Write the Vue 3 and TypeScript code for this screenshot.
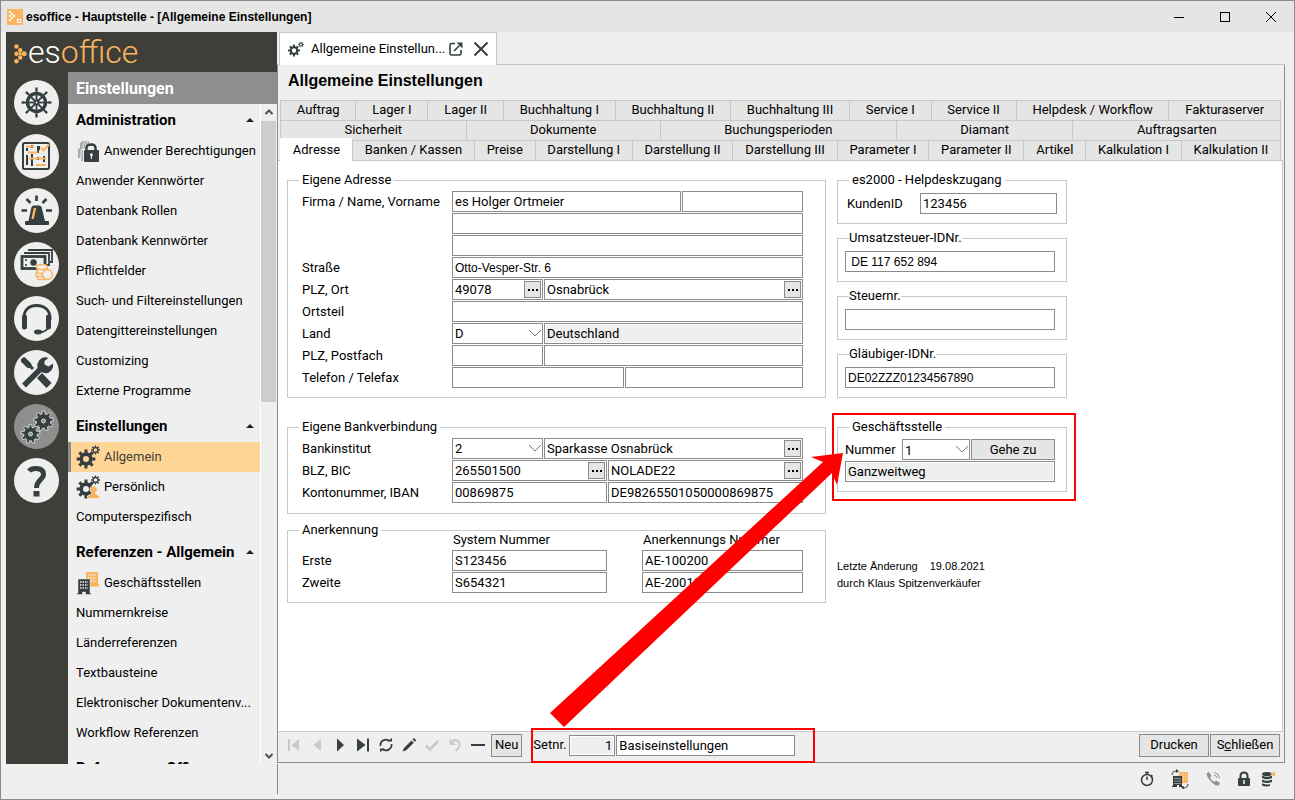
<script setup lang="ts">
import { ref } from 'vue'

interface NavItem {
  label: string
  icon?: 'locks' | 'gears' | 'person' | 'buildings'
}
interface NavGroup {
  title: string
  items: NavItem[]
}

const groups: NavGroup[] = [
  {
    title: 'Administration',
    items: [
      { label: 'Anwender Berechtigungen', icon: 'locks' },
      { label: 'Anwender Kennwörter' },
      { label: 'Datenbank Rollen' },
      { label: 'Datenbank Kennwörter' },
      { label: 'Pflichtfelder' },
      { label: 'Such- und Filtereinstellungen' },
      { label: 'Datengittereinstellungen' },
      { label: 'Customizing' },
      { label: 'Externe Programme' },
    ],
  },
  {
    title: 'Einstellungen',
    items: [
      { label: 'Allgemein', icon: 'gears' },
      { label: 'Persönlich', icon: 'person' },
      { label: 'Computerspezifisch' },
    ],
  },
  {
    title: 'Referenzen - Allgemein',
    items: [
      { label: 'Geschäftsstellen', icon: 'buildings' },
      { label: 'Nummernkreise' },
      { label: 'Länderreferenzen' },
      { label: 'Textbausteine' },
      { label: 'Elektronischer Dokumentenv...' },
      { label: 'Workflow Referenzen' },
    ],
  },
  { title: 'Referenzen - Office', items: [] },
]

const tabRows: string[][] = [
  ['Auftrag', 'Lager I', 'Lager II', 'Buchhaltung I', 'Buchhaltung II', 'Buchhaltung III', 'Service I', 'Service II', 'Helpdesk / Workflow', 'Fakturaserver'],
  ['Sicherheit', 'Dokumente', 'Buchungsperioden', 'Diamant', 'Auftragsarten'],
  ['Adresse', 'Banken / Kassen', 'Preise', 'Darstellung I', 'Darstellung II', 'Darstellung III', 'Parameter I', 'Parameter II', 'Artikel', 'Kalkulation I', 'Kalkulation II'],
]

const modules = ['Cockpit', 'Projekte', 'Alarm', 'Finanzen', 'Service', 'Werkzeuge', 'Einstellungen', 'Hilfe']

const activeNav = ref('Allgemein')
const activeTab = ref('Adresse')
const activeModule = ref('Einstellungen')

/** Closed outline of a cog wheel with a round hole (even-odd filled). */
function gear(cx: number, cy: number, teeth: number, outer: number, inner: number, hole: number): string {
  const step = (Math.PI * 2) / teeth
  const pts: string[] = []
  const add = (r: number, a: number) => pts.push(`${(cx + r * Math.cos(a)).toFixed(2)} ${(cy + r * Math.sin(a)).toFixed(2)}`)
  for (let i = 0; i < teeth; i++) {
    const a = i * step - Math.PI / 2
    add(inner, a - step * 0.3)
    add(outer, a - step * 0.2)
    add(outer, a + step * 0.2)
    add(inner, a + step * 0.3)
  }
  return `M${pts.join('L')}ZM${cx - hole} ${cy}a${hole} ${hole} 0 1 0 ${hole * 2} 0a${hole} ${hole} 0 1 0 ${-hole * 2} 0Z`
}

const spokes = [0, 45, 90, 135, 180, 225, 270, 315]
</script>

<template>
  <div class="window">
    <header class="titlebar">
      <svg class="app-icon" viewBox="0 0 16 16" aria-hidden="true">
        <rect width="16" height="16" fill="#fbb55e" />
        <g fill="#fff">
          <rect x="2" y="2" width="2" height="2" /><rect x="4" y="4" width="2" height="2" /><rect x="2" y="6" width="2" height="2" /><rect x="6" y="6" width="2" height="2" /><rect x="4" y="8" width="2" height="2" /><rect x="2" y="10" width="2" height="2" />
        </g>
        <rect x="10.5" y="10.5" width="3" height="3" fill="none" stroke="#fff" />
      </svg>
      <span class="window-title">esoffice - Hauptstelle - [Allgemeine Einstellungen]</span>
      <div class="window-controls">
        <button type="button" aria-label="Minimieren"><svg viewBox="0 0 12 12"><path d="M1 6.5H11" /></svg></button>
        <button type="button" aria-label="Maximieren"><svg viewBox="0 0 12 12"><rect x="1.5" y="1.5" width="9" height="9" /></svg></button>
        <button type="button" aria-label="Fenster schließen"><svg viewBox="0 0 12 12"><path d="M1 1L11 11M11 1L1 11" /></svg></button>
      </div>
    </header>

    <div class="workspace">
      <aside class="sidebar">
        <div class="logo">
          <svg viewBox="0 0 13 20" aria-hidden="true">
            <g fill="#fbb55e"><circle cx="2.5" cy="2.5" r="2.2" /><circle cx="6.2" cy="6.2" r="2.2" /><circle cx="2.5" cy="9.8" r="2.2" /><circle cx="10.200" cy="9.8" r="2.500" /><circle cx="6.2" cy="13.5" r="2.2" /><circle cx="2.5" cy="17.2" r="2.2" /><circle cx="6.3" cy="9.8" r="1.600" /></g>
          </svg>
          <span class="logo-text">es<b>office</b></span>
        </div>
        <nav class="rail" aria-label="Module">
          <button v-for="(m, i) in modules" :key="m" type="button" :aria-label="m" :class="{ current: m === activeModule }" @click="activeModule = m">
            <svg viewBox="0 0 45 45" fill="none" stroke="#353f40">
              <g v-if="i === 0">
                <circle cx="22.5" cy="22.5" r="9" stroke-width="3.4" />
                <g v-for="a in spokes" :key="a" :transform="`rotate(${a} 22.5 22.5)`"><path d="M22.5 22.5V9" stroke-width="1.8" /><path d="M22.5 7.5V10.5" stroke-width="2.2" /></g>
                <circle cx="22.5" cy="22.5" r="2.6" fill="#353f40" /><circle cx="22.5" cy="22.5" r="1" fill="#efefef" stroke="none" />
              </g>
              <g v-else-if="i === 1">
                <rect x="9" y="9" width="26" height="26" rx="1.5" stroke-width="2" />
                <path d="M13 14V17M13 21V31M18 11V14M18 20V32M24 12V19M24 23V26M24 30V32M30 22V28M25 12V16" stroke-width="2" />
                <path d="M12 12.5H20M14 18.5H24M15 24.5H32M22 31H32M27 13.5L29.5 16.5L35 10.5" stroke="#fbb55e" stroke-width="2" />
              </g>
              <g v-else-if="i === 2">
                <path d="M14.5 33L17.5 19Q18 17.5 20 17.5H25Q27 17.5 27.5 19L31 33Z" fill="#353f40" stroke="none" />
                <rect x="11" y="33" width="24" height="4" rx="1" fill="#353f40" stroke="none" />
                <path d="M21 20L18.5 31" stroke="#fbb55e" stroke-width="2.4" />
                <path d="M22.5 7.5V13M12.5 11L16.5 15M32.5 11L28.5 15M7.5 22.5H13M32 22.5H38" stroke-width="2.6" />
              </g>
              <g v-else-if="i === 3">
                <path d="M15 9V8H38V20H36M11 12V11H35V23H32" stroke-width="1.8" />
                <rect x="8" y="14.5" width="23" height="12" stroke-width="2.8" />
                <circle cx="19.500" cy="20.500" r="3.200" fill="#353f40" stroke="none" /><circle cx="12" cy="18" r="1" fill="#353f40" stroke="none" /><circle cx="12" cy="23" r="1" fill="#353f40" stroke="none" />
                <g fill="#efefef" stroke="#fbb55e" stroke-width="1.4"><rect x="23" y="32.500" width="11" height="5" rx="2.500" /><rect x="22" y="29.500" width="11" height="5" rx="2.500" /><rect x="23" y="26.500" width="11" height="5" rx="2.500" /><ellipse cx="28" cy="25" rx="5.500" ry="2.500" /><circle cx="33.500" cy="32.500" r="5" /></g>
              </g>
              <g v-else-if="i === 4">
                <path d="M10 24C9 14 15 9.500 22.500 9.500S37 14 36 24" stroke-width="2.800" />
                <path d="M10.500 21V31M34.500 21V31" stroke-width="5" stroke-linecap="round" />
                <path d="M35 30Q33 36 25 36.500" stroke-width="1.800" />
                <ellipse cx="24" cy="36" rx="4" ry="2.400" fill="#353f40" stroke="none" />
              </g>
              <g v-else-if="i === 5">
                <path d="M12 12L19 19" stroke-width="3" /><path d="M10 10.500L14.500 15" stroke-width="6" stroke-linecap="round" />
                <path d="M25 25L35 35.500" stroke-width="7" />
                <path d="M10 35.500L29 16.500" stroke="#efefef" stroke-width="8" />
                <path d="M10 35.500L28 17.500" stroke-width="5.500" />
                <path d="M34.500 8A8 8 0 1 0 39 13.500L34.500 16.500L30.500 14.500L30.500 11Z" fill="#353f40" stroke="none" />
              </g>
              <g v-else-if="i === 6" fill="#353f40" fill-rule="evenodd" stroke="#efefef" stroke-width="0.8">
                <path :d="gear(29.5, 17, 9, 10, 7.3, 2)" /><path :d="gear(16.5, 30, 9, 9.5, 6.8, 2)" />
              </g>
              <g v-else>
                <path d="M15 13Q17 10.500 22 10.500Q29.500 10.500 29.500 16.500C29.500 21.500 22.500 22 22.500 30" stroke-width="5" />
                <rect x="19.500" y="33" width="6" height="5.500" fill="#353f40" stroke="none" />
              </g>
            </svg>
          </button>
        </nav>
        <h2 class="nav-title">Einstellungen</h2>
        <nav class="nav-list" aria-label="Einstellungen">
          <section v-for="g in groups" :key="g.title">
            <h3>{{ g.title }}<span class="collapse" aria-hidden="true"></span></h3>
            <a v-for="it in g.items" :key="it.label" href="#" :class="{ selected: it.label === activeNav }" @click.prevent="activeNav = it.label">
              <svg v-if="it.icon" viewBox="0 0 24 24" aria-hidden="true">
                <g v-if="it.icon === 'locks'">
                  <path d="M2 19V9.500H4V5Q4 2 9 2H13V8L9 22H5V19Z" fill="#a8abab" />
                  <path d="M5 20V10.500H7V6Q7 3 12 3" fill="none" stroke="#efefef" />
                  <path d="M7 22V9.500H9V7Q10 4 15 4T21 8V22Z" fill="#efefef" />
                  <path d="M10.500 12V9Q10.500 5.500 15 5.500T19.500 9V12" fill="none" stroke="#353f40" stroke-width="2.400" />
                  <rect x="8" y="11" width="15" height="12" rx="1" fill="#353f40" /><path d="M14.200 14.500h2.400v2l-.7 1v2.500h-1v-2.500l-.7-1z" fill="#fff" />
                </g>
                <g v-else-if="it.icon === 'gears' || it.icon === 'person'" fill-rule="evenodd" fill="#353f40">
                  <path :d="gear(10, 14, 8, 9.5, 6.6, 3)" /><path :d="gear(19.5, 5, 8, 4.5, 3.1, 1.8)" />
                  <path v-if="it.icon === 'person'" d="M17.500 11a3.500 3.500 0 0 1 2 6.500v1.500l4 2v2.500H11.500v-2.500l4-2v-1.500a3.500 3.500 0 0 1 2-6.500z" fill="#fbb55e" stroke="#efefef" stroke-width="0.6" />
                </g>
                <g v-else>
                  <rect x="10" y="1" width="12" height="14" fill="#fbb55e" /><path d="M12 4H20M12 7H20M12 10H20" stroke="#efefef" stroke-width="1.500" stroke-dasharray="1.500 1" /><rect x="14" y="13" width="9" height="2.500" fill="#fbb55e" />
                  <path d="M2 8H14V22H15V23.500H9.500V21H6.500V23.500H1V22H2Z" fill="#353f40" stroke="#efefef" stroke-width="0.5" /><path d="M4 11H12M4 14H12M4 17H12" stroke="#efefef" stroke-width="1.500" stroke-dasharray="1.500 1" />
                </g>
              </svg>
              <span>{{ it.label }}</span>
            </a>
          </section>
        </nav>
        <div class="scrollbar" aria-hidden="true">
          <svg viewBox="0 0 16 16"><path d="M4.500 10L8 6.500L11.500 10" /></svg>
          <div class="thumb"></div>
          <svg viewBox="0 0 16 16"><path d="M4.500 6L8 9.500L11.500 6" /></svg>
        </div>
      </aside>

      <main class="main">
        <div class="doc-tabs">
          <div class="doc-tab">
            <svg viewBox="0 0 16 16" fill="#353f40" fill-rule="evenodd" aria-hidden="true"><path :d="gear(6, 9.5, 8, 6, 4.3, 2.2)" /><path :d="gear(13, 3.5, 8, 2.8, 1.9, 1)" /></svg>
            <span>Allgemeine Einstellun...</span>
            <button type="button" aria-label="Abdocken"><svg viewBox="0 0 16 16" fill="none" stroke="#353f40" stroke-width="1.600"><path d="M7 2.500H3.500Q2 2.500 2 4V12.500Q2 14 3.500 14H11.500Q13 14 13 12.500V9M6 10L11.500 4.500" /><path d="M8.500 1.500H14.500V7.500Z" fill="#353f40" stroke="none" /></svg></button>
            <button type="button" aria-label="Tab schließen"><svg viewBox="0 0 16 16" fill="none" stroke="#353f40" stroke-width="2"><path d="M1.500 1.500L14.500 14.500M14.500 1.500L1.500 14.500" /></svg></button>
          </div>
        </div>

        <div class="panel">
          <h1>Allgemeine Einstellungen</h1>
          <div class="tabs" role="tablist">
            <div v-for="(row, r) in tabRows" :key="r" class="tab-row">
              <button v-for="t in row" :key="t" type="button" role="tab" :aria-selected="t === activeTab" :class="{ active: t === activeTab }" @click="activeTab = t">{{ t }}</button>
            </div>
          </div>

          <form class="page" @submit.prevent>
            <div class="col">
              <fieldset class="address">
                <legend>Eigene Adresse</legend>
                <div class="rows">
                  <div class="row"><label for="firma">Firma / Name, Vorname</label><div class="fields name"><input id="firma" value="es Holger Ortmeier"><input aria-label="Vorname"></div></div>
                  <div class="row"><span></span><div class="fields"><input aria-label="Name Zusatz 1"></div></div>
                  <div class="row"><span></span><div class="fields"><input aria-label="Name Zusatz 2"></div></div>
                  <div class="row"><label for="str">Straße</label><div class="fields"><input id="str" class="sans" value="Otto-Vesper-Str. 6"></div></div>
                  <div class="row"><label for="plz">PLZ, Ort</label><div class="fields short"><span class="lookup"><input id="plz" value="49078"><button type="button" aria-label="PLZ suchen"><i></i></button></span><span class="lookup"><input aria-label="Ort" value="Osnabrück"><button type="button" aria-label="Ort suchen"><i></i></button></span></div></div>
                  <div class="row"><label for="ot">Ortsteil</label><div class="fields"><input id="ot"></div></div>
                  <div class="row"><label for="land">Land</label><div class="fields short"><span class="combo"><select id="land"><option>D</option></select><svg viewBox="0 0 14 8"><path d="M1 1L7 7L13 1" /></svg></span><input aria-label="Landname" readonly value="Deutschland"></div></div>
                  <div class="row"><label for="pf">PLZ, Postfach</label><div class="fields short"><input id="pf"><input aria-label="Postfach"></div></div>
                  <div class="row"><label for="tel">Telefon / Telefax</label><div class="fields phone"><input id="tel"><input aria-label="Telefax"></div></div>
                </div>
              </fieldset>

              <fieldset class="bank">
                <legend>Eigene Bankverbindung</legend>
                <div class="rows">
                  <div class="row"><label for="bank">Bankinstitut</label><div class="fields short"><span class="combo"><select id="bank"><option>2</option></select><svg viewBox="0 0 14 8"><path d="M1 1L7 7L13 1" /></svg></span><span class="lookup"><input aria-label="Bankname" value="Sparkasse Osnabrück"><button type="button" aria-label="Bank suchen"><i></i></button></span></div></div>
                  <div class="row"><label for="blz">BLZ, BIC</label><div class="fields account"><span class="lookup"><input id="blz" value="265501500"><button type="button" aria-label="BLZ suchen"><i></i></button></span><span class="lookup"><input aria-label="BIC" value="NOLADE22"><button type="button" aria-label="BIC suchen"><i></i></button></span></div></div>
                  <div class="row"><label for="konto">Kontonummer, IBAN</label><div class="fields account"><input id="konto" value="00869875"><input aria-label="IBAN" value="DE98265501050000869875"></div></div>
                </div>
              </fieldset>

              <fieldset class="approval">
                <legend>Anerkennung</legend>
                <div class="rows">
                  <div class="row head"><span></span><div class="fields numbers"><span>System Nummer</span><span>Anerkennungs Nummer</span></div></div>
                  <div class="row"><label for="s1">Erste</label><div class="fields numbers"><input id="s1" value="S123456"><input aria-label="Anerkennungs Nummer 1" value="AE-100200"></div></div>
                  <div class="row"><label for="s2">Zweite</label><div class="fields numbers"><input id="s2" value="S654321"><input aria-label="Anerkennungs Nummer 2" value="AE-200100"></div></div>
                </div>
              </fieldset>
            </div>

            <div class="col side">
              <fieldset class="helpdesk">
                <legend>es2000 - Helpdeskzugang</legend>
                <div class="customer"><label for="kid">KundenID</label><input id="kid" value="123456"></div>
              </fieldset>
              <fieldset class="tight"><legend><label for="ust">Umsatzsteuer-IDNr.</label></legend><input id="ust" class="sans" value=" DE 117 652 894"></fieldset>
              <fieldset class="tight"><legend><label for="stnr">Steuernr.</label></legend><input id="stnr"></fieldset>
              <fieldset class="tight"><legend><label for="gid">Gläubiger-IDNr.</label></legend><input id="gid" class="sans" value="DE02ZZZ01234567890"></fieldset>
              <div class="branch">
                <fieldset>
                  <legend>Geschäftsstelle</legend>
                  <div class="branch-row"><label for="nr">Nummer</label><span class="combo"><select id="nr"><option>1</option></select><svg viewBox="0 0 14 8"><path d="M1 1L7 7L13 1" /></svg></span><button type="button" class="btn">Gehe zu</button></div>
                  <input aria-label="Name der Geschäftsstelle" readonly value="Ganzweitweg">
                </fieldset>
                <div class="mark"></div>
              </div>
              <p class="changed"><span>Letzte Änderung</span><span>19.08.2021</span><br>durch Klaus Spitzenverkäufer</p>
            </div>
          </form>

          <div class="toolbar">
            <div class="record-nav">
              <button type="button" disabled aria-label="Erster"><svg viewBox="0 0 16 16"><path d="M2 2H4V14H2ZM13 2V14L5.500 8Z" /></svg></button>
              <button type="button" disabled aria-label="Zurück"><svg viewBox="0 0 16 16"><path d="M12 2V14L4.500 8Z" /></svg></button>
              <button type="button" aria-label="Weiter"><svg viewBox="0 0 16 16"><path d="M5 1.500V14.500L12 8Z" /></svg></button>
              <button type="button" aria-label="Letzter"><svg viewBox="0 0 16 16"><path d="M2 1.500V14.500L10.500 8ZM12 1.500H14V14.500H12Z" /></svg></button>
              <button type="button" aria-label="Aktualisieren"><svg viewBox="0 0 16 16"><path d="M2.500 9A5.500 5.500 0 0 1 11.500 4M13.500 7A5.500 5.500 0 0 1 4.500 12" fill="none" stroke="#353f40" stroke-width="1.800" /><path d="M9 4.500H14V1ZM7 11.500H2V15Z" /></svg></button>
              <button type="button" aria-label="Bearbeiten"><svg viewBox="0 0 16 16"><path d="M1.500 14.500L3 11L10.500 3.500L12.800 5.800L5.300 13.300ZM11.500 2.500L13 1L15.300 3.300L13.800 4.800Z" /></svg></button>
              <button type="button" disabled aria-label="Speichern"><svg viewBox="0 0 16 16"><path d="M2 8.500L6 12.500L14 4" fill="none" stroke="#c9cbca" stroke-width="2.800" /></svg></button>
              <button type="button" disabled aria-label="Rückgängig"><svg viewBox="0 0 16 16"><path d="M4 5Q8 1.500 11.500 4.500Q14.500 9 8.500 14" fill="none" stroke="#c9cbca" stroke-width="2" /><path d="M2.500 1.500V8H9Z" /></svg></button>
              <button type="button" aria-label="Löschen"><svg viewBox="0 0 16 16"><path d="M1 7H15V9H1Z" /></svg></button>
            </div>
            <button type="button" class="btn">Neu</button>
            <div class="set">
              <label for="set">Setnr.</label><input id="set" class="set-number" readonly value="1"><input class="set-name" aria-label="Setname" value="Basiseinstellungen">
              <div class="mark"></div>
            </div>
            <div class="actions">
              <button type="button" class="btn">Drucken</button>
              <button type="button" class="btn">S<u>c</u>hließen</button>
            </div>
          </div>
        </div>
      </main>
    </div>

    <footer class="status">
      <svg viewBox="0 0 16 16" fill="none" stroke="#353f40"><circle cx="8" cy="9" r="5.500" stroke-width="1.500" /><path d="M8 9V5.500M6 1.500H10M8 1.500V3.500M12 4L13.500 5.500" stroke-width="1.500" /></svg>
      <svg viewBox="0 0 20 20"><rect x="9" y="3" width="9" height="11" fill="#fbb55e" /><path d="M11 5.500H17M11 8H17M11 10.500H17" stroke="#efefef" stroke-dasharray="1 1" /><path d="M3 7H12V17H13V18H9V16H7V18H2V17H3Z" fill="#353f40" /><path d="M4.500 9.500H11M4.500 12H11M4.500 14.500H11" stroke="#efefef" stroke-dasharray="1 1" /><path d="M2 6Q2 2 7 2M18 15Q18 19 13 19" fill="none" stroke="#353f40" /><path d="M6 0L9 2L6 4ZM14 17L11 19L14 20Z" fill="#353f40" /></svg>
      <svg viewBox="0 0 16 16" fill="none" stroke="#8e9191"><path d="M2 2L4 1L6.500 5L5 6.500Q6.500 9.500 9.500 11L11 9.500L15 12L14 14Q11 16 6 10.500Q1 5.500 2 2Z" fill="#8e9191" stroke="none" /><path d="M9 4Q11.500 4.500 12 7M9.500 1.500Q14 2.500 14.500 7" /></svg>
      <svg viewBox="0 0 16 16"><path d="M4.500 8V5Q4.500 1.500 8 1.500T11.500 5V8" fill="none" stroke="#353f40" stroke-width="2" /><rect x="2" y="7" width="12" height="8" rx="1" fill="#353f40" /><path d="M7.200 9H8.800V13H7.200Z" fill="#efefef" /></svg>
      <svg viewBox="0 0 16 16" fill="#353f40"><ellipse cx="7" cy="3" rx="5" ry="2" /><path d="M2 4.500Q7 7 12 4.500V7Q7 9.500 2 7ZM2 8.500Q7 11 12 8.500V11Q7 13 2 11ZM2 12.300Q7 14.500 10 13V15Q6 16 2 14.500Z" /><path d="M10 3L15 0.500V5.500Z" fill="#fbb55e" /></svg>
    </footer>

    <svg class="arrow" viewBox="0 0 1295 800" aria-hidden="true"><path d="M550 713L823 462L811 457L843 453L837 485L832 473L564 727Z" fill="#f00" /></svg>
  </div>
</template>

<style>
html,
body {
  margin: 0;
}
</style>

<style scoped>
.window {
  --dark: #3f3f39;
  --line: #8b8b8b;
  --soft: #c8c8c8;
  --face: #e5e5e5;
  --bg: #efefef;
  --accent: #fbb55e;
  position: relative;
  display: flex;
  flex-direction: column;
  box-sizing: border-box;
  height: 100vh;
  border: 1px solid var(--line);
  background: var(--bg);
  color: #000;
  font: 13px/18px Roboto, 'Liberation Sans', sans-serif;
  overflow: hidden;
}
.window *,
.window *::before {
  box-sizing: border-box;
}
button,
input,
select {
  margin: 0;
  font: inherit;
  color: inherit;
}
svg {
  display: block;
}

/* title bar */
.titlebar {
  display: flex;
  flex: none;
  align-items: center;
  height: 31px;
  padding-left: 6px;
  background: var(--face);
}
.app-icon {
  width: 16px;
  height: 16px;
}
.window-title {
  margin-left: 3px;
  font-family: 'Liberation Sans', Arial, sans-serif;
  font-weight: 700;
  font-size: 12px;
}
.window-controls {
  display: flex;
  margin-left: auto;
}
.window-controls button {
  display: grid;
  place-items: center;
  width: 46px;
  height: 31px;
  padding: 0;
  border: 0;
  background: none;
}
.window-controls svg {
  width: 12px;
  height: 12px;
  fill: none;
  stroke: #000;
}

.workspace {
  display: flex;
  flex: 1;
  min-height: 0;
  padding: 0 9px 0 5px;
}

/* sidebar */
.sidebar {
  display: grid;
  grid-template: 40px 32px minmax(0, 1fr) / 62px minmax(0, 1fr) 17px;
  flex: 0 0 271px;
  min-height: 0;
  background: var(--dark);
}
.logo {
  display: flex;
  grid-column: 1 / -1;
  align-items: center;
  gap: 1px;
  padding-left: 8px;
}
.logo svg {
  width: 13px;
  height: 20px;
  margin-top: 4px;
}
.logo-text {
  color: #fff;
  font-size: 32px;
  line-height: 42px;
  font-weight: 300;
}
.logo-text b {
  color: var(--accent);
  font-weight: 300;
}
.rail {
  display: flex;
  grid-row: 2 / 4;
  flex-direction: column;
  gap: 9px;
  min-height: 0;
  padding: 8px 0 0 8px;
}
.rail button {
  width: 45px;
  height: 45px;
  padding: 0;
  border: 0;
  border-radius: 50%;
  background: var(--bg);
}
.rail button.current {
  background: #8e8e8e;
}
.nav-title {
  grid-column: 2 / -1;
  margin: 0;
  padding-left: 8px;
  background: #8e8e8e;
  color: #fff;
  font-size: 16px;
  line-height: 34px;
}
.nav-list {
  overflow: hidden;
  padding-top: 2px;
  background: var(--bg);
}
.nav-list h3 {
  display: flex;
  align-items: center;
  justify-content: space-between;
  height: 36px;
  margin: 0;
  padding: 6px 6px 2px 8px;
  font-size: 15px;
}
.nav-list section:first-child h3 {
  height: 30px;
  padding-top: 0;
}
.collapse {
  border: 4px solid transparent;
  border-top-width: 0;
  border-bottom-color: #222;
}
.nav-list a {
  display: flex;
  align-items: center;
  gap: 4px;
  height: 30px;
  padding: 0 0 1px 8px;
  color: #000;
  text-decoration: none;
  white-space: nowrap;
}
.nav-list a svg {
  flex: none;
  width: 24px;
  height: 24px;
}
.nav-list a.selected {
  padding-left: 5px;
  border-left: 3px solid #8e8e8e;
  background: #ffd596;
  color: #3f3f39;
}
.scrollbar {
  display: flex;
  flex-direction: column;
  justify-content: space-between;
  border-left: 1px solid #fff;
  background: var(--bg);
}
.scrollbar svg {
  width: 16px;
  height: 16px;
  fill: none;
  stroke: #505050;
  stroke-width: 2;
}
.thumb {
  width: 15px;
  height: 281px;
  margin: 1px 0 auto;
  background: #cdcdcd;
}

/* document area */
.main {
  display: flex;
  flex: 1;
  flex-direction: column;
  min-width: 0;
  padding-bottom: 1px;
}
.doc-tabs {
  flex: 0 0 33px;
  height: 33px;
  padding-left: 2px;
  border-bottom: 1px solid var(--soft);
}
.doc-tab {
  display: flex;
  align-items: center;
  width: 218px;
  height: 33px;
  margin-bottom: -1px;
  padding-left: 8px;
  border: 1px solid var(--soft);
  border-bottom: 0;
  background: #fff;
}
.doc-tab span {
  width: 131px;
  margin: 0 6px 0 7px;
  white-space: nowrap;
}
.doc-tab svg {
  width: 16px;
  height: 16px;
}
.doc-tab button {
  padding: 0;
  border: 0;
  background: none;
}
.doc-tab button + button {
  margin-left: 9px;
}
.panel {
  display: flex;
  flex: 1;
  flex-direction: column;
  border: 1px solid var(--line);
  border-top: 0;
  padding-right: 1px;
}
h1 {
  margin: 0;
  padding: 4px 0 7px 10px;
  font: 700 16px/24px 'Liberation Sans', Arial, sans-serif;
}
.tabs {
  padding: 0 2px;
  border-bottom: 1px solid var(--soft);
}
.tab-row {
  display: flex;
  border-right: 1px solid var(--soft);
}
.tab-row button {
  flex: 1 1 auto;
  height: 20px;
  padding: 0 0 2px;
  border: 1px solid var(--soft);
  border-width: 1px 0 0 1px;
  background: var(--face);
  line-height: 17px;
  white-space: nowrap;
}
.tab-row button.active {
  z-index: 1;
  height: 23px;
  margin: -2px 0 -1px;
  border-color: #fff;
  background: #fff;
}

/* form */
.page {
  display: grid;
  flex: 1;
  grid-template-columns: minmax(0, 539px) minmax(0, 230px);
  gap: 11px;
  padding: 10px 0 0 9px;
  border-right: 1px solid var(--soft);
  background: #fff;
}
.col {
  display: flex;
  flex-direction: column;
}
fieldset {
  min-width: 0;
  margin: 0;
  padding: 2px 22px 9px 11px;
  border: 1px solid var(--soft);
}
legend {
  padding: 0 3px;
  line-height: 18px;
}
.rows {
  display: grid;
  gap: 1px;
  padding-left: 3px;
}
.row {
  display: grid;
  grid-template-columns: 150px minmax(0, 1fr);
  min-height: 21px;
}
.row > label {
  line-height: 21px;
}
.fields {
  display: grid;
  gap: 1px;
}
.fields.name {
  grid-template-columns: 229fr 121fr;
}
.fields.short {
  grid-template-columns: 91px minmax(0, 1fr);
}
.fields.phone {
  grid-template-columns: 172fr 178fr;
}
.fields.account {
  grid-template-columns: 155fr 195fr;
}
.fields.numbers {
  grid-template-columns: 155fr 161fr;
  gap: 35px;
}
input,
select {
  width: 100%;
  min-width: 0;
  height: 21px;
  padding: 0 2px;
  border: 1px solid var(--line);
  border-radius: 0;
  outline: 0;
  background: #fff;
}
input[readonly] {
  background: var(--bg);
  box-shadow: inset 0 0 0 1px #fff;
}
input.sans {
  font-family: 'Liberation Sans', Arial, sans-serif;
  font-size: 12px;
}
.lookup {
  display: flex;
  padding: 1px;
  border: 1px solid var(--line);
}
.lookup input {
  height: 17px;
  padding: 0 1px;
  border: 0;
}
.lookup button {
  display: grid;
  flex: 0 0 17px;
  place-items: center;
  padding: 0;
  border: 1px solid var(--line);
  background: var(--face);
}
.lookup i {
  width: 10px;
  height: 2px;
  background: repeating-linear-gradient(90deg, #000 0 2px, transparent 2px 4px);
}
.combo {
  position: relative;
}
.combo select {
  display: block;
  appearance: none;
}
.combo svg {
  position: absolute;
  right: 1px;
  top: 6px;
  width: 14px;
  height: 8px;
  fill: none;
  stroke: #777;
  pointer-events: none;
}
.bank {
  margin: 20px 0 7px;
  padding-bottom: 10px;
}
.approval {
  padding-top: 0;
}
.approval .rows {
  grid-template-rows: 10px;
}
.row.head {
  min-height: 0;
  height: 18px;
  margin-top: -8px;
}
.row.head span {
  padding-left: 1px;
}
.side {
  gap: 5px;
}
.helpdesk {
  padding: 4px 9px 9px 11px;
}
.customer {
  display: grid;
  grid-template-columns: 73px minmax(0, 1fr);
  margin-left: -2px;
  line-height: 21px;
}
.tight {
  padding: 4px 11px 9px 7px;
}
.tight legend {
  margin-left: 4px;
  padding: 0;
}
.tight input {
  display: block;
}
.branch {
  position: relative;
  margin-top: 15px;
}
.branch fieldset {
  padding: 3px 11px 9px 7px;
}
.branch legend {
  margin-left: 4px;
}
.branch-row {
  display: grid;
  grid-template-columns: 57px 68px minmax(0, 1fr);
  margin-bottom: 1px;
  line-height: 21px;
}
.branch-row .btn {
  height: 21px;
  margin-left: 1px;
}
.branch fieldset > input {
  display: block;
}
.mark {
  position: absolute;
  inset: -5px -9px -9px -5px;
  border: 2px solid #f00;
  pointer-events: none;
}
.changed {
  margin: 61px 0 0;
  font: 11px/17px 'Liberation Sans', Arial, sans-serif;
}
.changed span + span {
  margin-left: 12px;
}
.btn {
  height: 23px;
  padding: 0 3px;
  border: 1px solid var(--line);
  background: var(--face);
  line-height: 18px;
}

/* record toolbar */
.toolbar {
  display: flex;
  flex: none;
  align-items: center;
  height: 31px;
  padding: 0 3px 4px 8px;
  border-top: 1px solid var(--soft);
}
.record-nav {
  display: flex;
  gap: 7px;
  margin-right: 5px;
}
.record-nav button {
  width: 16px;
  height: 16px;
  padding: 0;
  border: 0;
  background: none;
}
.record-nav svg {
  width: 16px;
  height: 16px;
  fill: #353f40;
}
.record-nav button:disabled svg {
  fill: #c9cbca;
}
.set {
  position: relative;
  display: flex;
  align-items: center;
  margin-left: 11px;
}
.set label {
  width: 36px;
}
.set .set-number {
  width: 46px;
  margin-right: 1px;
  text-align: right;
}
.set .set-name {
  width: 179px;
}
.set .mark {
  inset: -7px -20px -7px -2px;
}
.actions {
  display: flex;
  gap: 1px;
  margin-left: auto;
}
.actions .btn {
  min-width: 70px;
}

/* status bar */
.status {
  display: flex;
  flex: none;
  align-items: center;
  justify-content: flex-end;
  gap: 15px;
  height: 30px;
  margin: 0 18px 5px 276px;
  border-left: 1px solid var(--line);
}
.status svg {
  width: 16px;
  height: 16px;
}
.status svg:nth-child(2) {
  width: 20px;
  height: 20px;
}
.status svg:last-child {
  margin-left: -7px;
}

.arrow {
  position: absolute;
  left: -1px;
  top: -1px;
  width: 1295px;
  height: 800px;
  pointer-events: none;
}
</style>
